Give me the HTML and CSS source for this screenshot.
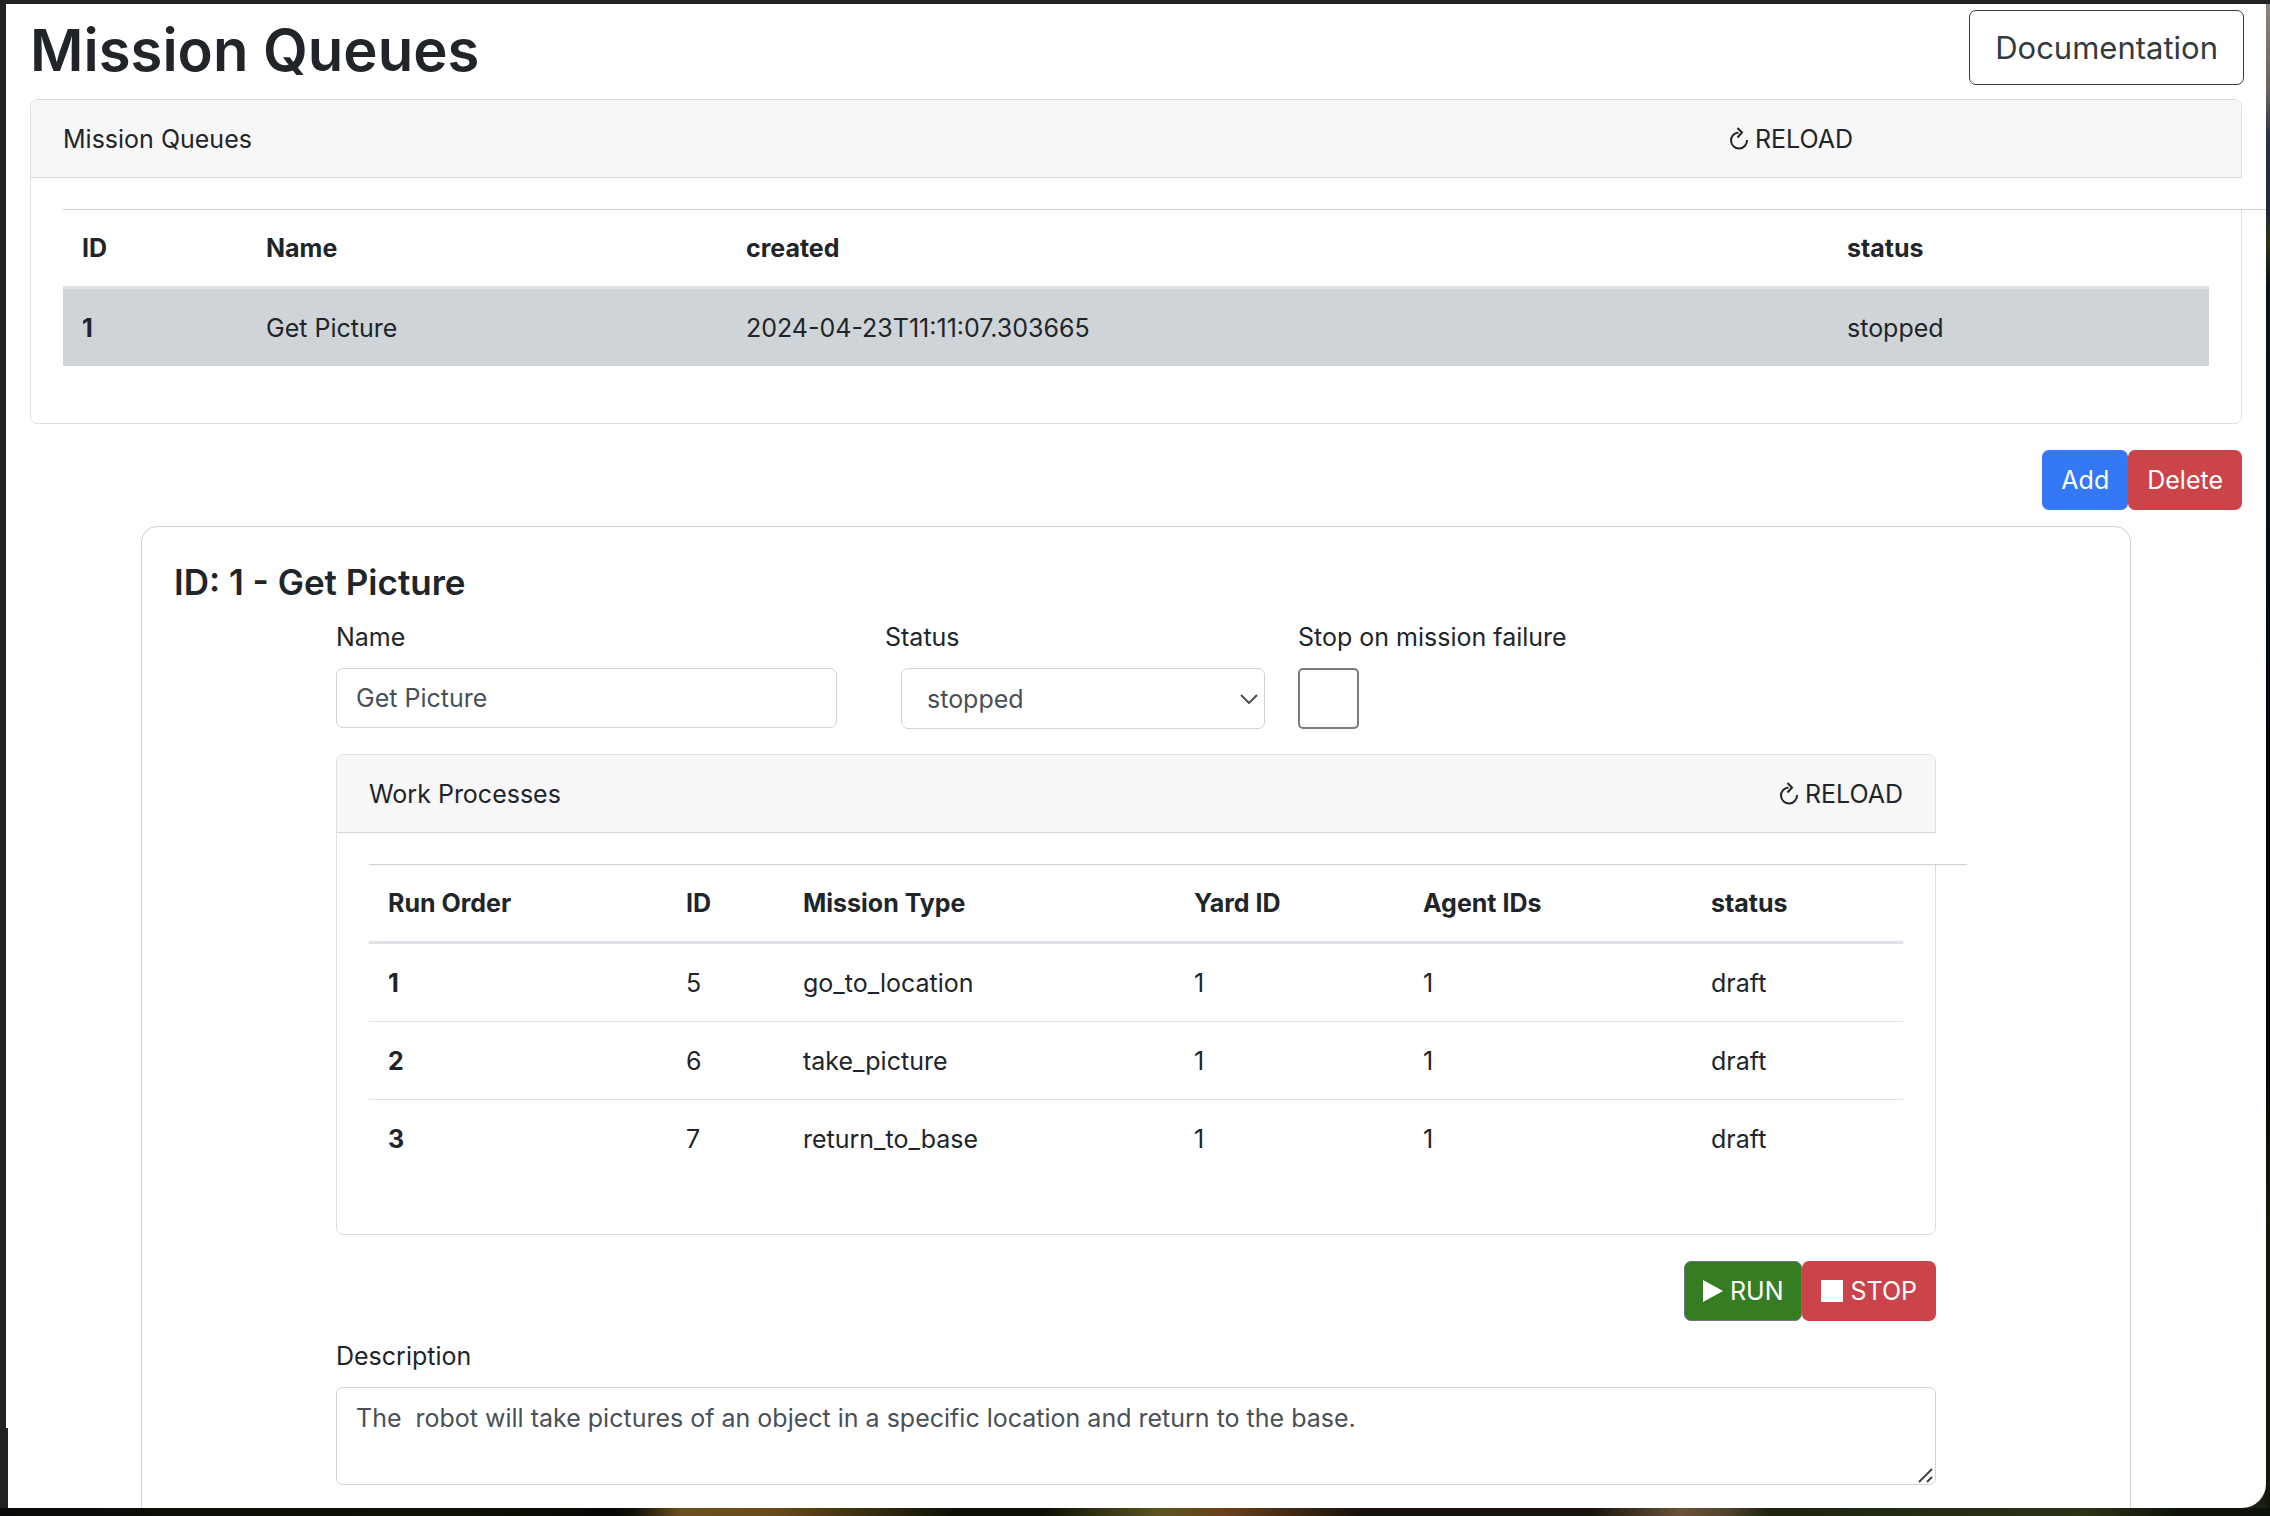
FILE: index.html
```html
<!DOCTYPE html>
<html lang="en">
<head>
<meta charset="utf-8">
<title>Mission Queues</title>
<link rel="stylesheet" href="styles.css">
</head>
<body>
<div class="desktop">
<main class="window">
  <header class="page-header">
    <h1 class="page-title">Mission Queues</h1>
    <a class="btn btn-outline btn-lg" href="#docs">Documentation</a>
  </header>

  <section class="card">
    <div class="card-header queue-header">
      <span>Mission Queues</span>
      <button class="reload" type="button"><svg class="icon-reload" viewBox="0 0 20 24" aria-hidden="true"><path d="M9.500 5.500A8 8 0 1 0 18 13M8.500 1L13 5.500L8.500 10.500" /></svg>RELOAD</button>
    </div>
    <div class="card-body">
      <div class="rule"></div>
      <table class="table queue-table">
        <colgroup><col class="q-id"><col class="q-name"><col class="q-created"><col class="q-status"></colgroup>
        <thead><tr><th>ID</th><th>Name</th><th>created</th><th>status</th></tr></thead>
        <tbody><tr class="selected"><th>1</th><td>Get Picture</td><td>2024-04-23T11:11:07.303665</td><td>stopped</td></tr></tbody>
      </table>
    </div>
  </section>

  <div class="actions">
    <button class="btn btn-primary" type="button">Add</button><button class="btn btn-danger" type="button">Delete</button>
  </div>

  <section class="panel">
    <h2 class="panel-title">ID: 1 - Get Picture</h2>
    <form class="panel-form">
      <div class="fields">
        <div class="field"><label for="name">Name</label><input class="control" id="name" type="text" value="Get Picture"></div>
        <div class="field"><label for="status">Status</label>
          <div class="select-wrap"><select class="control" id="status"><option>stopped</option><option>running</option></select><svg class="chevron" viewBox="0 0 18 10" aria-hidden="true"><path d="M1 1L9 9L17 1" /></svg></div></div>
        <div class="field"><label for="stop">Stop on mission failure</label><input class="check" id="stop" type="checkbox"></div>
      </div>

      <section class="card">
        <div class="card-header work-header">
          <span>Work Processes</span>
          <button class="reload" type="button"><svg class="icon-reload" viewBox="0 0 20 24" aria-hidden="true"><path d="M9.500 5.500A8 8 0 1 0 18 13M8.500 1L13 5.500L8.500 10.500" /></svg>RELOAD</button>
        </div>
        <div class="card-body">
          <div class="rule"></div>
          <table class="table work-table">
            <colgroup><col class="w-order"><col class="w-id"><col class="w-type"><col class="w-yard"><col class="w-agent"><col class="w-status"></colgroup>
            <thead><tr><th>Run Order</th><th>ID</th><th>Mission Type</th><th>Yard ID</th><th>Agent IDs</th><th>status</th></tr></thead>
            <tbody>
              <tr><th>1</th><td>5</td><td>go_to_location</td><td>1</td><td>1</td><td>draft</td></tr>
              <tr><th>2</th><td>6</td><td>take_picture</td><td>1</td><td>1</td><td>draft</td></tr>
              <tr><th>3</th><td>7</td><td>return_to_base</td><td>1</td><td>1</td><td>draft</td></tr>
            </tbody>
          </table>
        </div>
      </section>

      <div class="actions">
        <button class="btn btn-run" type="button"><svg class="icon-run" viewBox="0 0 20 22" aria-hidden="true"><path d="M0 0L20 11L0 22Z" /></svg>RUN</button><button class="btn btn-danger btn-stop" type="button"><svg class="icon-stop" viewBox="0 0 22 22" aria-hidden="true"><path d="M0 0H22V22H0Z" /></svg>STOP</button>
      </div>

      <div class="field description">
        <label for="description">Description</label>
        <div class="area-wrap"><textarea class="control area" id="description">The  robot will take pictures of an object in a specific location and return to the base.</textarea><svg class="grip" viewBox="0 0 15 15" aria-hidden="true"><path d="M1 14L14 1M9 14L14 9" /></svg></div>
      </div>
    </form>
  </section>
</main>
</div>
</body>
</html>
```
FILE: styles.css
```css
*, *::before, *::after { box-sizing: border-box; }

body {
  margin: 0;
  color: #212529;
  background: #1b1c12;
  font: 25px/38px Inter, "Liberation Sans", sans-serif;
}

/* Dark desktop that shows around the window's edges */
.desktop {
  height: 100vh;
  padding: 4px 4px 8px 6px;
  overflow: hidden;
  background:
    linear-gradient(#222, #222) 0 0 / 100% 4px no-repeat,
    linear-gradient(90deg, #0a0b08, #0e1206 20%, #060704 27%, #14120a 28%, #6b4f1e 30%, #6b4a1a 34%, #3a3010 38%, #0c1006 42%, #0c1006 46%, #5a5420 51%, #6a3f1a 54%, #16110c 60%, #17120e 70%, #6a5238 74%, #54422c 76%, #1c2410 78%, #2a3316 92%, #0c120a 96%) 0 100% / 100% 8px no-repeat,
    linear-gradient(#232221, #232221) 0 0 / 6px 100% no-repeat,
    linear-gradient(#8f8580, #6a625f 6%, #2c3347 9%, #1e2a3c 14%, #2d3510 16%, #08131e 19%, #06101a 34%, #05060a 50%, #060606 70%, #141a06 80%, #12180c) 100% 0 / 4px 100% no-repeat;
}

.window {
  height: 100%;
  overflow: hidden;
  padding: 6px 24px 0;
  background: linear-gradient(#20252b, #20252b) 0 100% / 2px 80px no-repeat #fff;
  border-bottom-right-radius: 24px;
}

h1, h2 { margin: 0; font-weight: 600; }

.page-header { display: flex; justify-content: space-between; align-items: flex-start; margin-right: -2px; height: 89px; }
.page-title { font-size: 58px; line-height: 80px; }

.card { border: 1px solid #dfdfdf; border-radius: 7px; }
.card-header {
  display: grid;
  align-items: center;
  height: 78px;
  padding: 0 32px;
  background: #f7f7f7;
  border-bottom: 1px solid #d5d5d5;
  border-radius: 6px 6px 0 0;
}
.queue-header { grid-template-columns: 1fr 480px; }
.work-header { grid-template-columns: 1fr auto; }
.card-body { padding: 0 32px 57px; }

/* Empty toolbar row, wider than the card, closed by a thin line */
.rule { height: 32px; margin-right: -64px; background: #fff; border-bottom: 1px solid #d0d0d0; }

.reload { display: flex; align-items: center; gap: 6px; padding: 0; border: 0; background: none; color: inherit; font: inherit; }
.icon-reload { width: 20px; height: 24px; fill: none; stroke: currentColor; stroke-width: 2; }

.table { width: 100%; table-layout: fixed; border-collapse: separate; border-spacing: 0; }
.table th, .table td { height: 78px; padding: 0 19px; text-align: left; border-top: 1px solid #dee2e6; }
.table th { font-weight: 700; }
.table thead th { height: 79px; border-top: 0; border-bottom: 3px solid #dee2e6; }
.table tbody tr:first-child > * { height: 77px; border-top: 0; }
.selected > * { background: #cfd4d8; }
.q-id { width: 184px; }
.q-name { width: 480px; }
.q-created { width: 1101px; }
.w-order { width: 298px; }
.w-id { width: 117px; }
.w-type { width: 391px; }
.w-yard { width: 229px; }
.w-agent { width: 288px; }

.btn {
  height: 60px;
  padding: 0 18px;
  border: 1px solid transparent;
  border-radius: 7px;
  color: #fff;
  font: inherit;
  text-decoration: none;
  display: inline-flex;
  align-items: center;
  justify-content: center;
}
.btn-lg { height: 75px; padding: 0 25px; font-size: 31px; }
.btn-outline { color: #343a40; border-color: #343a40; }
.btn-primary { background: #3478f6; }
.btn-danger { background: #cb444a; }
.btn-run { background: #367c22; border-color: #6c757d; gap: 7px; }
.btn-stop { gap: 7px; }
.icon-run { width: 20px; height: 22px; fill: currentColor; }
.icon-stop { width: 22px; height: 22px; fill: currentColor; }

.actions { display: flex; justify-content: flex-end; margin-top: 26px; }

.panel { margin: 16px 111px 0; padding: 31px 32px 60px; border: 1px solid #d0d0d0; border-radius: 16px; }
.panel-title { font-size: 35px; line-height: 48px; }
.panel-form { padding: 0 162px; margin-top: 12px; }

.fields { display: grid; grid-template-columns: 549px 413px 1fr; margin-bottom: 25px; }
.field { display: flex; flex-direction: column; gap: 12px; align-items: flex-start; }
.control {
  height: 60px;
  padding: 0 19px;
  color: #495057;
  background: #fff;
  border: 1px solid #ced4da;
  border-radius: 7px;
  font: inherit;
}
input.control { width: 501px; }
.select-wrap { position: relative; margin-left: 16px; }
select.control { width: 364px; height: 61px; padding-left: 25px; appearance: none; display: block; }
.chevron { position: absolute; right: 7px; top: 26px; width: 18px; height: 10px; fill: none; stroke: #495057; stroke-width: 2; }
.check { appearance: none; width: 61px; height: 61px; margin: 0; border: 2px solid #7c7c7c; border-radius: 5px; background: #fff; }

.description { margin-top: 16px; }
.area-wrap { position: relative; width: 100%; }
.area { display: block; width: 100%; height: 98px; padding: 11px 19px; resize: none; }
.grip { position: absolute; right: 3px; bottom: 2px; width: 15px; height: 15px; fill: none; stroke: #444; stroke-width: 2; }
```
